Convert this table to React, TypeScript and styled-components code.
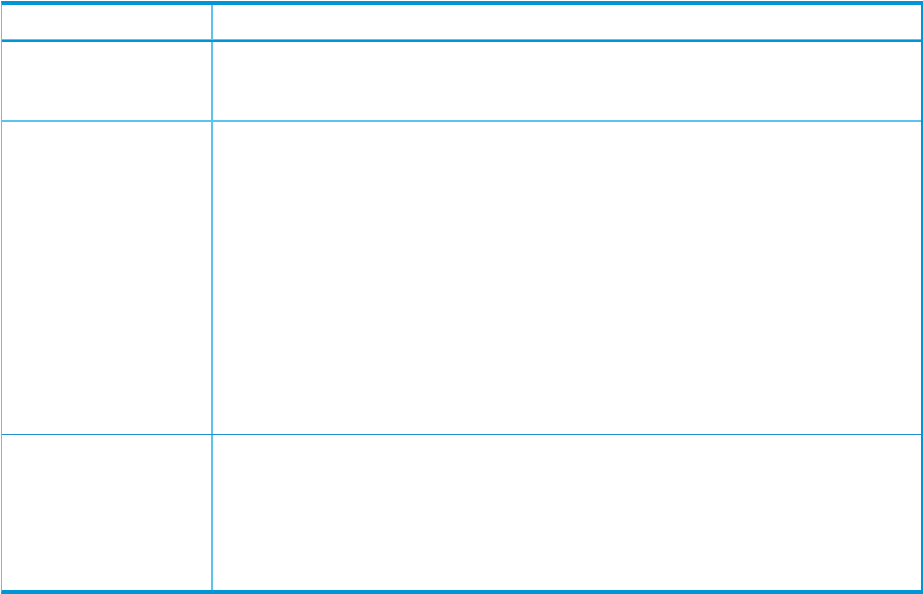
import React from "react";
import styled, { createGlobalStyle } from "styled-components";

const Global = createGlobalStyle`
  html, body { margin: 0; padding: 0; background: #ffffff; }
  body { font-family: "Liberation Sans", Arial, sans-serif; }
`;

const DARK = "#0096d6";
const LIGHT = "#5cc2ee";

const Table = styled.div`
  margin: 1px 0 0 1px;
  width: 922px;
  box-sizing: border-box;
  border-top: 4px solid ${DARK};
  border-bottom: 4px solid ${DARK};
  border-left: 1px solid ${LIGHT};
  border-right: 2px solid ${DARK};
  display: flex;
  flex-direction: column;
`;

const Row = styled.div<{ $h: number; $line?: string }>`
  display: grid;
  grid-template-columns: 211px 1fr;
  height: ${(p) => p.$h}px;
  box-sizing: border-box;
  ${(p) => (p.$line ? `border-bottom: ${p.$line};` : "")}
`;

const HeaderRow = styled(Row)`
  box-shadow: inset 0 -1px 0 ${LIGHT};
`;

const Cell = styled.div`
  border-right: 2px solid ${LIGHT};
  &:last-child { border-right: none; }
`;

export default function App() {
  return (
    <>
      <Global />
      <Table>
        <HeaderRow $h={37} $line={`2px solid ${DARK}`}>
          <Cell />
          <Cell />
        </HeaderRow>
        <Row $h={80} $line={`2px solid ${LIGHT}`}>
          <Cell />
          <Cell />
        </Row>
        <Row $h={313} $line={`1px solid #1e8fcc`}>
          <Cell />
          <Cell />
        </Row>
        <Row $h={155}>
          <Cell />
          <Cell />
        </Row>
      </Table>
    </>
  );
}
